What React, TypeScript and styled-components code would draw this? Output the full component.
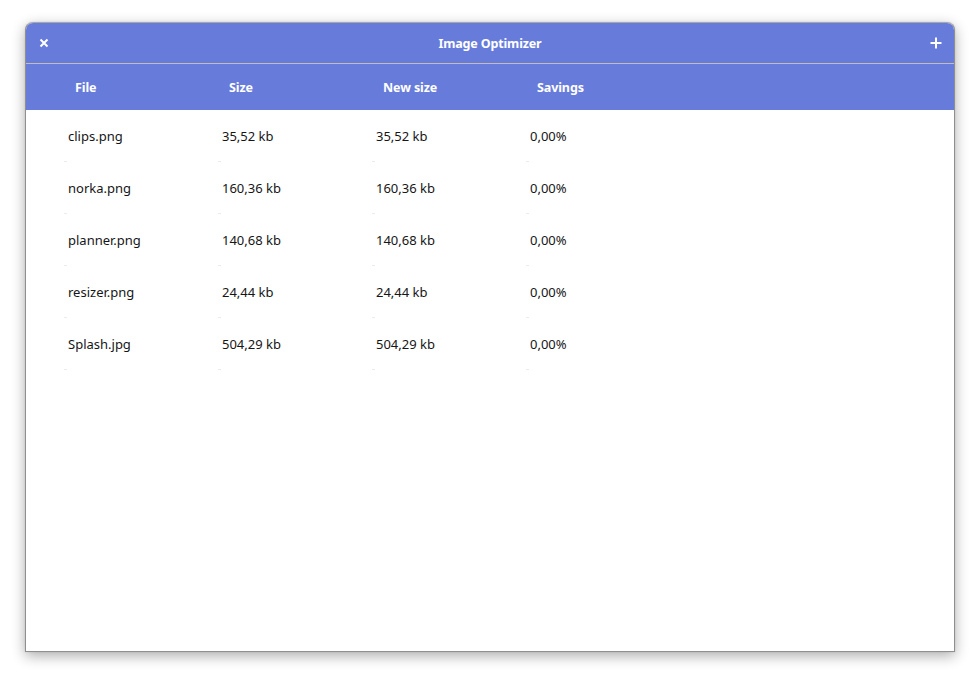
import React from "react";
import styled, { createGlobalStyle } from "styled-components";

const Global = createGlobalStyle`
  html, body { margin: 0; padding: 0; background: #ffffff; }
  body { font-family: "Noto Sans", "Open Sans", sans-serif; }
`;

const Page = styled.div`
  width: 980px;
  height: 680px;
  padding: 22px 0 0 25px;
  box-sizing: border-box;
  overflow: hidden;
`;

const Window = styled.div`
  width: 930px;
  height: 630px;
  box-sizing: border-box;
  border: 1px solid #8f8f8f;
  border-top-color: #a8a8a8;
  border-radius: 8px 8px 0 0;
  background: #ffffff;
  box-shadow: 0 4px 14px rgba(0, 0, 0, 0.32), 0 0 2px rgba(0, 0, 0, 0.12);
  display: flex;
  flex-direction: column;
  overflow: hidden;
`;

const TitleBar = styled.div`
  height: 40px;
  background: #677bdb;
  border-bottom: 1px solid #c3bdb6;
  display: grid;
  grid-template-columns: 36px 1fr 36px;
  align-items: center;
  color: #ffffff;
`;

const Title = styled.div`
  text-align: center;
  font-size: 12.5px;
  font-weight: 700;
  letter-spacing: -0.15px;
`;

const IconButton = styled.div`
  display: flex;
  align-items: center;
  justify-content: center;
  height: 40px;
  width: 36px;
`;

const HeaderRow = styled.div`
  height: 46px;
  background: #677bdb;
  display: grid;
  grid-template-columns: repeat(4, 154px);
  padding-left: 37px;
  align-items: center;
  color: #ffffff;
`;

const HeaderCell = styled.div`
  padding-left: 12px;
  font-size: 12.5px;
  font-weight: 700;
  letter-spacing: -0.1px;
`;

const Body = styled.div`
  flex: 1;
  padding-left: 37px;
`;

const Row = styled.div`
  height: 52px;
  display: grid;
  grid-template-columns: repeat(4, 154px);
  align-items: center;
`;

const Cell = styled.div`
  position: relative;
  height: 52px;
  display: flex;
  align-items: center;
  padding-left: 5px;
  font-size: 13px;
  color: #161616;
  &::after {
    content: "";
    position: absolute;
    left: 1px;
    bottom: 0;
    width: 3px;
    height: 1px;
    background: #ebebeb;
  }
`;

const files = [
  ["clips.png", "35,52 kb", "35,52 kb", "0,00%"],
  ["norka.png", "160,36 kb", "160,36 kb", "0,00%"],
  ["planner.png", "140,68 kb", "140,68 kb", "0,00%"],
  ["resizer.png", "24,44 kb", "24,44 kb", "0,00%"],
  ["Splash.jpg", "504,29 kb", "504,29 kb", "0,00%"],
];

export default function App() {
  return (
    <>
      <Global />
      <Page>
        <Window>
          <TitleBar>
            <IconButton>
              <svg width="10" height="10" viewBox="0 0 10 10">
                <path d="M1.5 1.5 L8.5 8.5 M8.5 1.5 L1.5 8.5" stroke="#fff" strokeWidth="2" />
              </svg>
            </IconButton>
            <Title>Image Optimizer</Title>
            <IconButton>
              <svg width="12" height="12" viewBox="0 0 12 12">
                <path d="M6 0.5 V11.5 M0.5 6 H11.5" stroke="#fff" strokeWidth="2" />
              </svg>
            </IconButton>
          </TitleBar>
          <HeaderRow>
            <HeaderCell>File</HeaderCell>
            <HeaderCell>Size</HeaderCell>
            <HeaderCell>New size</HeaderCell>
            <HeaderCell>Savings</HeaderCell>
          </HeaderRow>
          <Body>
            {files.map((r) => (
              <Row key={r[0]}>
                {r.map((c, i) => (
                  <Cell key={i}>{c}</Cell>
                ))}
              </Row>
            ))}
          </Body>
        </Window>
      </Page>
    </>
  );
}
